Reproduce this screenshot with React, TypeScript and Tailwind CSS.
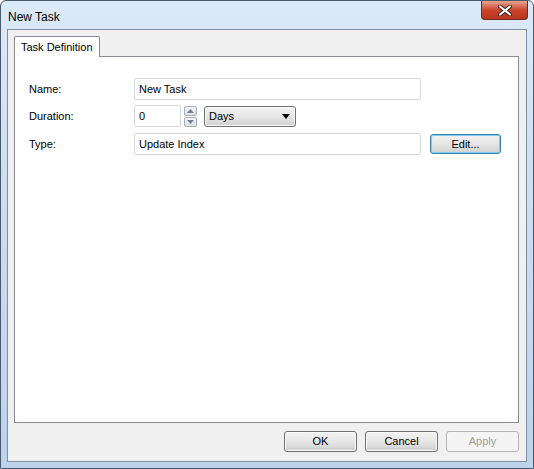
import React from "react";

const ui = { fontFamily: '"Liberation Sans", Arial, sans-serif' };

function SpinButton({ up }: { up?: boolean }) {
  return (
    <div className="w-[13px] h-[10px] border border-[#a7adb5] rounded-[2px] bg-gradient-to-b from-[#f4f5f7] to-[#dde1e6] flex items-center justify-center">
      <svg width="7" height="4" viewBox="0 0 7 4">
        {up ? <path d="M0 4 L3.5 0 L7 4 Z" fill="#6b7f96" /> : <path d="M0 0 L3.5 4 L7 0 Z" fill="#6b7f96" />}
      </svg>
    </div>
  );
}

function Field({ value, className = "" }: { value: string; className?: string }) {
  return (
    <div className={`h-[22px] border border-[#d5d9de] rounded-[2px] bg-white px-[4px] flex items-center text-[11px] text-black ${className}`}>
      {value}
    </div>
  );
}

function DlgButton({ label, disabled }: { label: string; disabled?: boolean }) {
  if (disabled) {
    return (
      <div className="w-[73px] h-[21px] border border-[#b5b5b5] rounded-[3px] bg-[#f4f4f4] flex items-center justify-center text-[11px] text-[#9d9d9d]">
        {label}
      </div>
    );
  }
  return (
    <div className="w-[73px] h-[21px] rounded-[3px] flex items-center justify-center text-[11px] text-black bg-gradient-to-b from-[#f2f2f2] via-[#e6e6e6] to-[#cfcfcf] border border-[#707070] shadow-[inset_0_0_0_1px_#fbfbfb]">
      {label}
    </div>
  );
}

export default function App() {
  return (
    <div className="w-[534px] h-[469px] bg-white" style={ui}>
      <div className="w-[534px] h-[469px] rounded-t-[6px] border border-[#4b5a6c] bg-gradient-to-b from-[#dce9f7] via-[#c9dcf1] to-[#bcd3ec] flex flex-col px-[6px] pb-[6px]">
        {/* title bar */}
        <div className="h-[28px] flex items-start justify-between">
          <span className="pt-[7px] pl-[1px] text-[12px] text-black">New Task</span>
          <div className="w-[47px] h-[19px] -mr-[1px] rounded-b-[4px] border border-t-0 border-[#6e2a22] bg-gradient-to-b from-[#e8a491] via-[#c9452c] to-[#b9351f] flex items-center justify-center">
            <svg width="14" height="11" viewBox="0 0 14 11">
              <path d="M2 1.5 L12 9.5 M12 1.5 L2 9.5" stroke="#3d1a14" strokeWidth="4" strokeLinecap="round" />
              <path d="M2 1.5 L12 9.5 M12 1.5 L2 9.5" stroke="#ffffff" strokeWidth="2.2" strokeLinecap="round" />
            </svg>
          </div>
        </div>

        {/* client area */}
        <div className="flex-1 border border-[#7d8ea3] bg-[#f0f0f0] flex flex-col pl-[6px] pr-[7px] pt-[6px]">
          <div className="flex">
            <div className="h-[21px] px-[6px] bg-white border border-[#898c95] border-b-0 rounded-t-[2px] flex items-center text-[11px] text-black relative z-10 -mb-[1px]">
              Task Definition
            </div>
          </div>
          <div className="h-[367px] bg-white border border-[#898c95] pt-[21px] pl-[14px] flex flex-col gap-[5px]">
            <div className="flex items-center">
              <span className="w-[105px] text-[11px] text-black">Name:</span>
              <Field value="New Task" className="w-[287px]" />
            </div>
            <div className="flex items-center">
              <span className="w-[105px] text-[11px] text-black">Duration:</span>
              <Field value="0" className="w-[47px] items-start pt-[2px]" />
              <div className="ml-[3px] flex flex-col gap-[1px]">
                <SpinButton up />
                <SpinButton />
              </div>
              <div className="ml-[7px] w-[92px] h-[21px] rounded-[3px] border border-[#707070] bg-gradient-to-b from-[#f2f2f2] via-[#e6e6e6] to-[#cfcfcf] shadow-[inset_0_0_0_1px_#fbfbfb] flex items-center justify-between pl-[4px] pr-[5px] text-[11px] text-black">
                Days
                <svg width="8" height="5" viewBox="0 0 8 5">
                  <path d="M0 0 L8 0 L4 5 Z" fill="#000" />
                </svg>
              </div>
            </div>
            <div className="flex items-center mt-[1px]">
              <span className="w-[105px] text-[11px] text-black">Type:</span>
              <Field value="Update Index" className="w-[287px]" />
              <div className="ml-[9px]">
                <div className="w-[71px] h-[20px] rounded-[3px] border border-[#3c7fb1] shadow-[inset_0_0_0_1px_#7ad0f4] bg-gradient-to-b from-[#f2f2f2] via-[#e6e6e6] to-[#cfcfcf] flex items-center justify-center text-[11px] text-black">
                  Edit...
                </div>
              </div>
            </div>
          </div>
          <div className="flex justify-end gap-[8px] pt-[8px]">
            <DlgButton label="OK" />
            <DlgButton label="Cancel" />
            <DlgButton label="Apply" disabled />
          </div>
        </div>
      </div>
    </div>
  );
}
